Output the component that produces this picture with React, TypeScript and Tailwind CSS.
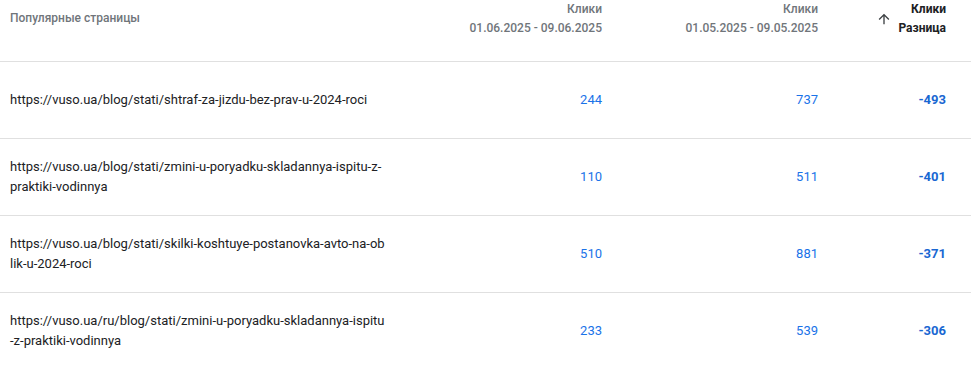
import React from "react"

interface Row {
    url: string
    current: number
    previous: number
    diff: number
}

const rows: Row[] = [
    { url: "https://vuso.ua/blog/stati/shtraf-za-jizdu-bez-prav-u-2024-roci", current: 244, previous: 737, diff: -493 },
    { url: "https://vuso.ua/blog/stati/zmini-u-poryadku-skladannya-ispitu-z-praktiki-vodinnya", current: 110, previous: 511, diff: -401 },
    { url: "https://vuso.ua/blog/stati/skilki-koshtuye-postanovka-avto-na-oblik-u-2024-roci", current: 510, previous: 881, diff: -371 },
    { url: "https://vuso.ua/ru/blog/stati/zmini-u-poryadku-skladannya-ispitu-z-praktiki-vodinnya", current: 233, previous: 539, diff: -306 },
]

const grid = "grid grid-cols-[394px_208px_216px_128px] pr-[25px]"

export default function App() {
    return (
        <div className="w-[971px] h-[366px] bg-white overflow-hidden font-['Roboto',sans-serif]">
            <div className={`${grid} h-[62px] border-b border-[#e0e0e0] text-[12px] leading-[19px]`}>
                <div className="pl-[10px] pt-[9px] text-[#70757a] font-medium">Популярные страницы</div>
                <div className="text-right text-[#70757a] font-medium">
                    <div>Клики</div>
                    <div>01.06.2025 - 09.06.2025</div>
                </div>
                <div className="text-right text-[#70757a] font-medium">
                    <div>Клики</div>
                    <div>01.05.2025 - 09.05.2025</div>
                </div>
                <div className="flex text-[#202124] font-bold">
                    <svg className="mt-[11px] ml-[58px] mr-auto shrink-0" width="16" height="16" viewBox="0 0 24 24">
                        <path fill="#3c4043" d="M4 12l1.41 1.41L11 7.83V20h2V7.83l5.58 5.59L20 12l-8-8-8 8z" />
                    </svg>
                    <div className="text-right">
                        <div>Клики</div>
                        <div>Разница</div>
                    </div>
                </div>
            </div>
            {rows.map((r) => (
                <div key={r.url} className={`${grid} h-[77px] border-b border-[#e0e0e0] items-center text-[13px] leading-[20px]`}>
                    <div className="pl-[10px] pr-[8px] text-[#202124] break-all">{r.url}</div>
                    <div className="text-right text-[#1a73e8]">{r.current}</div>
                    <div className="text-right text-[#1a73e8]">{r.previous}</div>
                    <div className="text-right text-[#1967d2] font-bold">{r.diff}</div>
                </div>
            ))}
        </div>
    )
}
